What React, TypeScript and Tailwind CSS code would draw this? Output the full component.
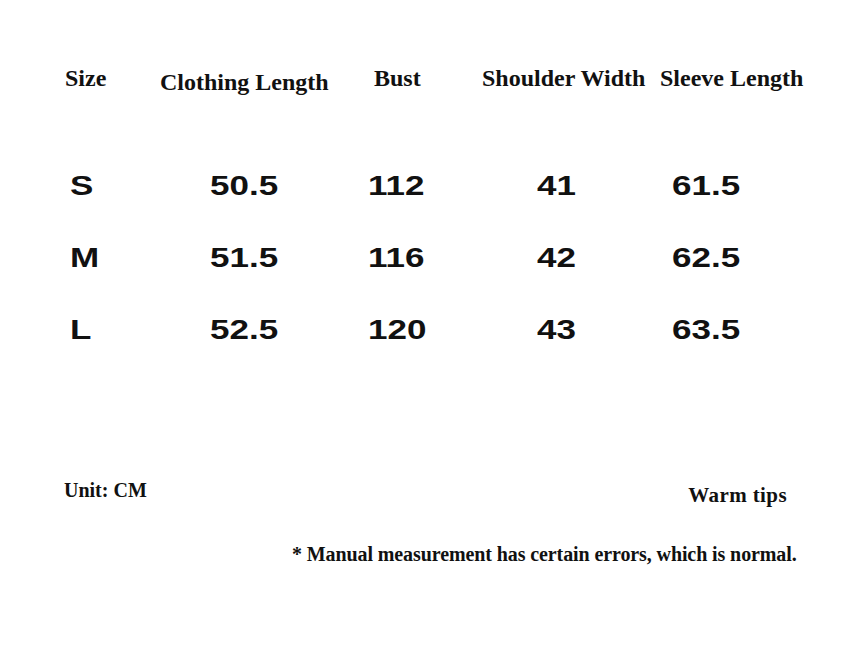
import React from "react";

const headers = [
  { label: "Size", w: "w-[95px]", extra: "" },
  { label: "Clothing Length", w: "w-[214px]", extra: "mt-[4px]" },
  { label: "Bust", w: "w-[108px]", extra: "" },
  { label: "Shoulder Width", w: "w-[178px]", extra: "" },
  { label: "Sleeve Length", w: "w-[180px]", extra: "" },
];

const rows = [
  ["S", "50.5", "112", "41", "61.5"],
  ["M", "51.5", "116", "42", "62.5"],
  ["L", "52.5", "120", "43", "63.5"],
];

const cellWidths = ["w-[140px]", "w-[158px]", "w-[169px]", "w-[135px]", "w-[150px]"];

const App: React.FC = () => {
  return (
    <div className="w-[862px] h-[671px] bg-white text-[#111] overflow-hidden">
      {/* header row */}
      <div className="flex items-start pl-[65px] pt-[64px] font-['Liberation_Serif',serif] font-bold text-[24px] leading-[28px]">
        {headers.map((h) => (
          <div key={h.label} className={`${h.w} shrink-0 whitespace-nowrap ${h.extra}`}>
            {h.label}
          </div>
        ))}
      </div>

      {/* values */}
      <div className="mt-[54px] pl-[70px] font-['Liberation_Sans',Arial,sans-serif] font-bold text-[28px]">
        {rows.map((r) => (
          <div key={r[0]} className="flex items-center h-[72px]">
            {r.map((v, i) => (
              <div key={i} className={`${cellWidths[i]} shrink-0`}>
                <span className="inline-block origin-left scale-x-125">{v}</span>
              </div>
            ))}
          </div>
        ))}
      </div>

      {/* notes */}
      <div className="mt-[112px] font-['Liberation_Serif',serif] font-bold text-[20px] leading-[24px]">
        <div className="flex justify-between pl-[64px] pr-[75px]">
          <span>Unit: CM</span>
          <span className="mt-[5px] text-[21px] tracking-[0.4px]">Warm tips</span>
        </div>
        <div className="mt-[35px] pl-[292px] tracking-[-0.1px]">
          * Manual measurement has certain errors, which is normal.
        </div>
      </div>
    </div>
  );
};

export default App;
